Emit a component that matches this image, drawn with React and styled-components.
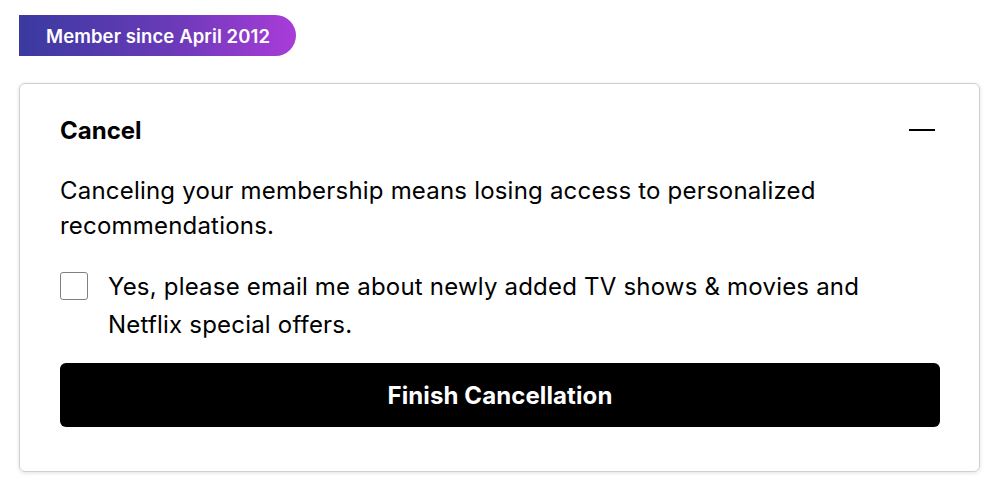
import React, { useState } from "react";
import styled, { createGlobalStyle } from "styled-components";

const Global = createGlobalStyle`
  html, body { margin: 0; padding: 0; background: #fff; }
  body { font-family: Inter, "Noto Sans", "Liberation Sans", sans-serif; color: #000; }
  * { box-sizing: border-box; }
`;

const Page = styled.div`
  padding: 15px 20px 14px 19px;
  display: flex;
  flex-direction: column;
  align-items: flex-start;
  gap: 27px;
`;

const Badge = styled.div`
  height: 41px;
  display: flex;
  align-items: center;
  padding: 0 26px 0 27px;
  background: linear-gradient(90deg, #3a3aa0 0%, #6a3ab8 55%, #a93cd9 100%);
  color: #fff;
  font-size: 18.5px;
  font-weight: 600;
  letter-spacing: 0.1px;
  border-radius: 0 21px 21px 0;
`;

const Card = styled.section`
  align-self: stretch;
  border: 1px solid #cfcfcf;
  border-radius: 6px;
  box-shadow: 0 1px 4px rgba(0, 0, 0, 0.12);
  padding: 29px 39px 44px 40px;
  display: flex;
  flex-direction: column;
`;

const Header = styled.div`
  display: flex;
  justify-content: space-between;
  align-items: center;
  height: 34px;
`;

const Title = styled.h2`
  margin: 0;
  font-size: 24px;
  font-weight: 700;
`;

const Toggle = styled.button`
  width: 26px;
  height: 26px;
  padding: 0;
  margin-right: 5px;
  border: none;
  background: transparent;
  display: flex;
  align-items: center;
  justify-content: center;
  cursor: pointer;
`;

const Dash = styled.span`
  width: 26px;
  height: 2px;
  background: #000;
`;

const Text = styled.p`
  margin: 26px 0 0;
  font-size: 24px;
  line-height: 35px;
  letter-spacing: 0.2px;
`;

const CheckRow = styled.label`
  margin-top: 25px;
  display: flex;
  align-items: flex-start;
  gap: 20px;
  font-size: 24px;
  line-height: 38px;
  letter-spacing: 0.2px;
  cursor: pointer;
`;

const Box = styled.span`
  flex: none;
  width: 28px;
  height: 28px;
  margin-top: 4px;
  border: 1px solid #808080;
  border-radius: 3px;
  background: #fff;
  display: flex;
  align-items: center;
  justify-content: center;
`;

const Hidden = styled.input`
  display: none;
`;

const Finish = styled.button`
  margin-top: 19px;
  height: 64px;
  border: none;
  border-radius: 6px;
  background: #000;
  color: #fff;
  font-family: inherit;
  font-size: 24px;
  font-weight: 700;
  letter-spacing: 0.1px;
  cursor: pointer;
`;

export default function App() {
  const [checked, setChecked] = useState(false);
  return (
    <>
      <Global />
      <Page>
        <Badge>Member since April 2012</Badge>
        <Card>
          <Header>
            <Title>Cancel</Title>
            <Toggle aria-label="Collapse">
              <Dash />
            </Toggle>
          </Header>
          <Text>
            Canceling your membership means losing access to personalized
            <br />
            recommendations.
          </Text>
          <CheckRow>
            <Hidden type="checkbox" checked={checked} onChange={(e) => setChecked(e.target.checked)} />
            <Box>
              {checked && (
                <svg width="18" height="18" viewBox="0 0 24 24" fill="none" stroke="#000" strokeWidth="3">
                  <path d="M4 12l5 5L20 6" />
                </svg>
              )}
            </Box>
            <span>
              Yes, please email me about newly added TV shows &amp; movies and
              <br />
              Netflix special offers.
            </span>
          </CheckRow>
          <Finish>Finish Cancellation</Finish>
        </Card>
      </Page>
    </>
  );
}
